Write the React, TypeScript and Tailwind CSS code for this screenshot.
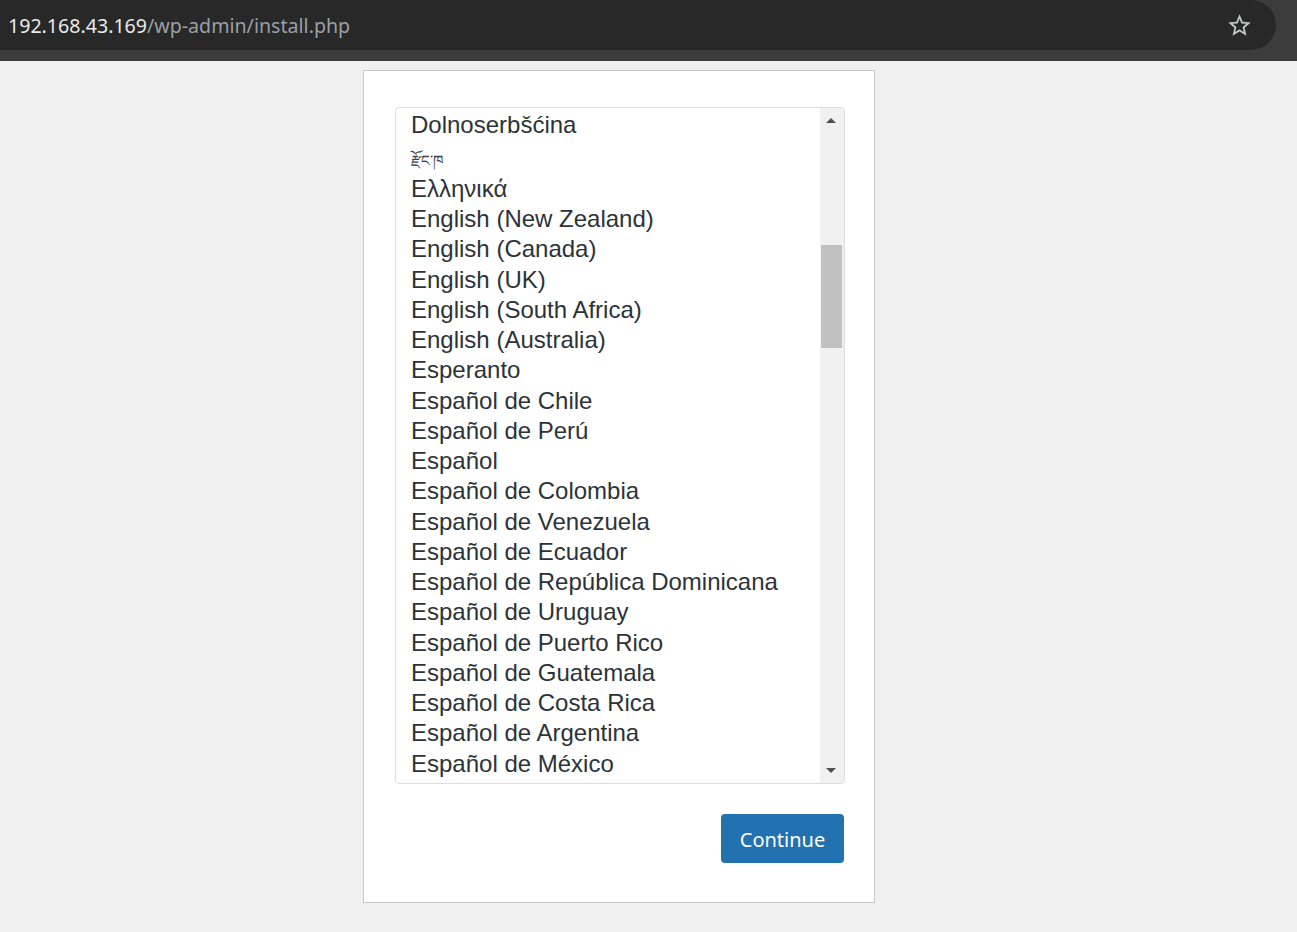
import React from "react";

const items = [
  "Dolnoserbšćina",
  "རྫོང་ཁ",
  "Ελληνικά",
  "English (New Zealand)",
  "English (Canada)",
  "English (UK)",
  "English (South Africa)",
  "English (Australia)",
  "Esperanto",
  "Español de Chile",
  "Español de Perú",
  "Español",
  "Español de Colombia",
  "Español de Venezuela",
  "Español de Ecuador",
  "Español de República Dominicana",
  "Español de Uruguay",
  "Español de Puerto Rico",
  "Español de Guatemala",
  "Español de Costa Rica",
  "Español de Argentina",
  "Español de México",
];

export default function App() {
  return (
    <div className="min-h-[932px] w-full bg-[#f0f0f1]">
      {/* browser header */}
      <div className="h-[61px] bg-[#3c3c3c]">
        <div className="flex h-[50px] w-[1276px] items-center justify-between rounded-r-[25px] bg-[#282828] pl-[8px] pr-[23px]">
          <div
            className="pt-[2px] text-[19.6px] leading-none"
            style={{ fontFamily: "'Noto Sans', 'Open Sans', sans-serif" }}
          >
            <span className="text-[#e8eaed]">192.168.43.169</span>
            <span className="text-[#9aa0a6]">/wp-admin/install.php</span>
          </div>
          <svg width="27" height="27" viewBox="0 0 24 24" fill="#c4c7c5">
            <path d="M22 9.24l-7.19-.62L12 2 9.19 8.63 2 9.24l5.46 4.73L5.82 21 12 17.27 18.18 21l-1.63-7.03L22 9.24zM12 15.4l-3.76 2.27 1-4.28-3.32-2.88 4.38-.38L12 6.1l1.71 4.04 4.38.38-3.32 2.88 1 4.28L12 15.4z" />
          </svg>
        </div>
      </div>

      {/* page */}
      <div className="pt-[9px] pl-[363px]">
        <div className="w-[512px] border border-[#c8c8c8] bg-white pl-[31px] pr-[29px] pt-[36px] pb-[39px]">
          <div className="flex h-[677px] w-[450px] overflow-hidden rounded-[4px] border border-[#dcdcde] bg-white">
            <div
              className="flex-1 overflow-hidden pt-[1.5px] pl-[15px] text-[24px] text-[#2c3338]"
              style={{ fontFamily: "'Liberation Sans', Arial, sans-serif" }}
            >
              {items.map((t, i) => (
                <div
                  key={i}
                  className={
                    i === 1
                      ? "flex h-[34px] items-center whitespace-nowrap pt-[6px] text-[15px] text-[#3c4250]"
                      : "flex h-[30.25px] items-center whitespace-nowrap"
                  }
                  style={
                    i === 1
                      ? { fontFamily: "'Noto Sans', 'DejaVu Sans', sans-serif" }
                      : undefined
                  }
                >
                  {t}
                </div>
              ))}
            </div>
            {/* scrollbar */}
            <div className="flex w-[24px] flex-col items-center justify-between bg-[#f1f1f1] pt-[10px] pb-[10px] pr-[2px]">
              <div className="h-0 w-0 border-x-[5px] border-b-[5px] border-x-transparent border-b-[#505050]" />
              <div className="flex w-full flex-1 flex-col items-center">
                <div className="h-[122px] w-full" />
                <div className="h-[103px] w-[21px] bg-[#c1c1c1]" />
              </div>
              <div className="h-0 w-0 border-x-[5px] border-t-[5px] border-x-transparent border-t-[#505050]" />
            </div>
          </div>
          <div className="mt-[30px] flex w-[450px] justify-end pr-[1px]">
            <button
              className="h-[49px] w-[123px] rounded-[4px] bg-[#2271b1] pt-[2px] text-[20px] text-white"
              style={{ fontFamily: "'Noto Sans', 'Open Sans', sans-serif" }}
            >
              Continue
            </button>
          </div>
        </div>
      </div>
    </div>
  );
}
